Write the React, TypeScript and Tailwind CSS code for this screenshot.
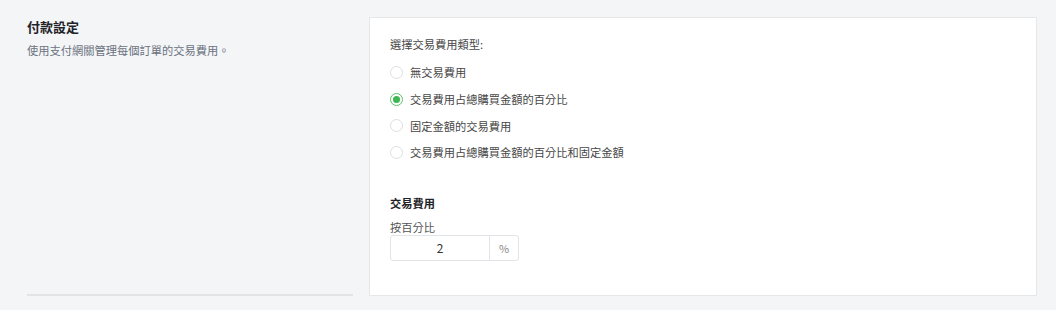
import { useState } from 'react';

const OPTIONS = [
  '無交易費用',
  '交易費用占總購買金額的百分比',
  '固定金額的交易費用',
  '交易費用占總購買金額的百分比和固定金額',
];

export default function App() {
  const [selected, setSelected] = useState(1);

  return (
    <div
      className="w-[1056px] h-[310px] bg-[#f4f5f7] flex pl-[27px] pr-[19px] pt-[17px] text-[11.25px] text-[#474747]"
      style={{ fontFamily: '"Noto Sans CJK TC", "Noto Sans", sans-serif' }}
    >
      <div className="w-[326px] h-[279px] border-b-2 border-[#e3e4e6] shrink-0">
        <h2 className="text-[13px] font-bold text-[#1f2328] leading-[20px]">付款設定</h2>
        <p className="text-[11.25px] text-[#6b7280] leading-[18px] mt-[4px]">使用支付網關管理每個訂單的交易費用。</p>
      </div>

      <div className="ml-[16px] flex-1 h-[279px] bg-white border border-[#e6e7e9] px-[20px] pt-[18px]">
        <p className="leading-[16px]">選擇交易費用類型:</p>
        <div className="flex flex-col mt-[7px]">
          {OPTIONS.map((label, i) => (
            <label
              key={label}
              onClick={() => setSelected(i)}
              className="h-[26.7px] flex items-center gap-[7px] cursor-pointer"
            >
              {selected === i ? (
                <span className="w-[13px] h-[13px] rounded-full border border-[#5ac26c] flex items-center justify-center">
                  <span className="w-[7px] h-[7px] rounded-full bg-[#3fb654]" />
                </span>
              ) : (
                <span className="w-[13px] h-[13px] rounded-full border border-[#dcdfe3] bg-white" />
              )}
              <span className="leading-[16px]">{label}</span>
            </label>
          ))}
        </div>

        <p className="mt-[29px] font-bold leading-[16px] text-[#1f2328]">交易費用</p>
        <p className="mt-[8px] leading-[16px] text-[#555]">按百分比</p>
        <div className="mt-0 w-[129px] h-[26px] flex border border-[#e2e4e7] rounded-[3px]">
          <div className="w-[99px] flex items-center justify-center text-[12px] text-[#333] border-r border-[#e2e4e7]">2</div>
          <div className="flex-1 flex items-center justify-center text-[11px] text-[#888]">%</div>
        </div>
      </div>
    </div>
  );
}
